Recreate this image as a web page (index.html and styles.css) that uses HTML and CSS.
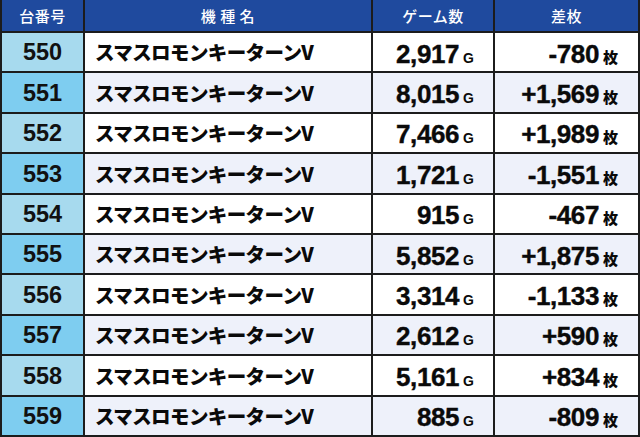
FILE: index.html
```html
<!DOCTYPE html>
<html lang="ja">
<head>
<meta charset="utf-8">
<link rel="stylesheet" href="styles.css">
</head>
<body>
<div class="table">
  <div class="th">台番号</div>
  <div class="th">機 種 名</div>
  <div class="th">ゲーム数</div>
  <div class="th">差枚</div>

  <div class="no">550</div><div class="name">スマスロモンキーターンV</div><div class="games"><span>2,917<span class="u">G</span></span></div><div class="diff"><span>-780<span class="u2">枚</span></span></div>
  <div class="no alt">551</div><div class="name alt">スマスロモンキーターンV</div><div class="games alt"><span>8,015<span class="u">G</span></span></div><div class="diff alt"><span>+1,569<span class="u2">枚</span></span></div>
  <div class="no">552</div><div class="name">スマスロモンキーターンV</div><div class="games"><span>7,466<span class="u">G</span></span></div><div class="diff"><span>+1,989<span class="u2">枚</span></span></div>
  <div class="no alt">553</div><div class="name alt">スマスロモンキーターンV</div><div class="games alt"><span>1,721<span class="u">G</span></span></div><div class="diff alt"><span>-1,551<span class="u2">枚</span></span></div>
  <div class="no">554</div><div class="name">スマスロモンキーターンV</div><div class="games"><span>915<span class="u">G</span></span></div><div class="diff"><span>-467<span class="u2">枚</span></span></div>
  <div class="no alt">555</div><div class="name alt">スマスロモンキーターンV</div><div class="games alt"><span>5,852<span class="u">G</span></span></div><div class="diff alt"><span>+1,875<span class="u2">枚</span></span></div>
  <div class="no">556</div><div class="name">スマスロモンキーターンV</div><div class="games"><span>3,314<span class="u">G</span></span></div><div class="diff"><span>-1,133<span class="u2">枚</span></span></div>
  <div class="no alt">557</div><div class="name alt">スマスロモンキーターンV</div><div class="games alt"><span>2,612<span class="u">G</span></span></div><div class="diff alt"><span>+590<span class="u2">枚</span></span></div>
  <div class="no">558</div><div class="name">スマスロモンキーターンV</div><div class="games"><span>5,161<span class="u">G</span></span></div><div class="diff"><span>+834<span class="u2">枚</span></span></div>
  <div class="no alt">559</div><div class="name alt">スマスロモンキーターンV</div><div class="games alt"><span>885<span class="u">G</span></span></div><div class="diff alt"><span>-809<span class="u2">枚</span></span></div>
</div>
</body>
</html>
```

FILE: styles.css
```css
html, body {
  margin: 0;
  padding: 0;
  background: #ffffff;
}
.table {
  box-sizing: border-box;
  width: 640px;
  height: 437px;
  display: grid;
  grid-template-columns: 81px 286px 120px 143px;
  grid-template-rows: 31px repeat(10, minmax(0, 1fr));
  gap: 2px;
  padding: 0 2px 2px 2px;
  background: #1c1c1c;
}
.table > div {
  line-height: 1;
  overflow: hidden;
}
.th {
  background: #1f4a9e;
  color: #ffffff;
  font-family: "Noto Sans CJK JP", "Noto Sans", sans-serif;
  font-weight: 500;
  font-size: 15px;
  display: flex;
  align-items: center;
  justify-content: center;
  letter-spacing: 0.5px;
}
.no {
  background: #a7daee;
  color: #111;
  font-family: "Liberation Sans", Arial, sans-serif;
  font-weight: bold;
  font-size: 23.5px;
  letter-spacing: 0;
  display: flex;
  align-items: center;
  justify-content: center;
  padding-top: 2px;
}
.no.alt {
  background: #7ecdf0;
}
.name, .games, .diff {
  background: #ffffff;
  color: #0a0a0a;
  display: flex;
  align-items: center;
}
.name.alt, .games.alt, .diff.alt {
  background: #eef1fa;
}
.name {
  padding-left: 10px;
  font-family: "Noto Sans CJK JP", sans-serif;
  font-weight: 900;
  font-size: 19.5px;
  letter-spacing: -0.6px;
}
.games, .diff {
  justify-content: flex-end;
  font-family: "Liberation Sans", Arial, sans-serif;
  font-weight: bold;
  font-size: 26px;
  letter-spacing: -0.4px;
  padding-top: 3px;
  -webkit-text-stroke: 0.4px #0a0a0a;
}
.games {
  padding-right: 19px;
}
.diff {
  padding-right: 20px;
}
.u {
  font-size: 14px;
  margin-left: 4px;
  letter-spacing: 0;
  -webkit-text-stroke: 0;
}
.u2 {
  font-family: "Noto Sans CJK JP", sans-serif;
  font-weight: 900;
  font-size: 15px;
  margin-left: 4px;
  letter-spacing: 0;
  -webkit-text-stroke: 0;
}
```
